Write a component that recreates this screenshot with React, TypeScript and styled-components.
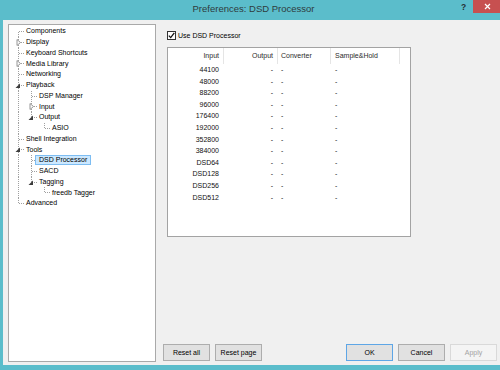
import React from 'react'
import styled, { createGlobalStyle } from 'styled-components'

const TEAL = '#5bbdcb'
const FACE = '#f0f0f0'
const FONT = `'Liberation Sans', Arial, sans-serif`
const ROW_H = 10.75

const GlobalStyle = createGlobalStyle`
  html, body {
    margin: 0;
    padding: 0;
    background: ${TEAL};
  }
  body {
    font-family: ${FONT};
    color: #000;
  }
`

const Window = styled.div`
  width: 500px;
  height: 370px;
  background: ${TEAL};
  display: flex;
  flex-direction: column;
  overflow: hidden;
`

const TitleBar = styled.div`
  height: 20px;
  flex-shrink: 0;
  display: grid;
  grid-template-columns: 1fr auto 1fr;
  align-items: start;
`

const Title = styled.div`
  grid-column: 2;
  padding: 3px 0 0 7px;
  font-size: 9.5px;
  line-height: 12px;
  color: #2f3b3d;
`

const Controls = styled.div`
  grid-column: 3;
  justify-self: end;
  display: flex;
  align-items: flex-start;
`

const HelpGlyph = styled.span`
  width: 10px;
  padding-top: 3px;
  margin-right: 2px;
  font-size: 8.5px;
  font-weight: bold;
  line-height: 9px;
  color: #253033;
`

const CloseButton = styled.div`
  width: 27px;
  height: 13px;
  background: #c75050;
  display: flex;
  align-items: center;
  justify-content: center;
  padding-left: 2px;
  box-sizing: border-box;
`

const Client = styled.div`
  flex: 1;
  margin: 0 0 5px 3px;
  padding: 4px 0 3px 5px;
  background: ${FACE};
  display: flex;
  gap: 7px;
  min-height: 0;
`

const Tree = styled.div`
  width: 148px;
  box-sizing: border-box;
  border: 1px solid #a9a9a9;
  background: #fff;
  padding: 1px 0 0 2px;
`

const TreeRow = styled.div`
  display: flex;
  align-items: center;
  height: ${ROW_H}px;
  white-space: nowrap;
`

const GuideSvg = styled.svg`
  width: 13px;
  height: ${ROW_H}px;
  flex-shrink: 0;
  display: block;
`

const TreeLabel = styled.span<{ $selected?: boolean }>`
  font-size: 7px;
  line-height: 8px;
  padding: 0 3px;
  margin-left: -2px;
  border: 1px solid ${({ $selected }) => ($selected ? '#7dbdf2' : 'transparent')};
  background: ${({ $selected }) => ($selected ? '#cce8ff' : 'transparent')};
`

const Side = styled.div`
  flex: 1;
  display: flex;
  flex-direction: column;
  padding-right: 3px;
`

const Page = styled.div`
  flex: 1;
  padding: 6px 0 0 4px;
`

const CheckRow = styled.label`
  display: flex;
  align-items: center;
  gap: 2px;
  height: 11px;
  font-size: 7px;
`

const CheckBox = styled.span`
  width: 9px;
  height: 9px;
  box-sizing: border-box;
  border: 1px solid #333;
  background: #fff;
  display: flex;
  align-items: center;
  justify-content: center;
`

const ListView = styled.div`
  margin-top: 6px;
  width: 244px;
  height: 190px;
  box-sizing: border-box;
  border: 1px solid #a3a3a3;
  background: #fff;
`

const ListRow = styled.div<{ $header?: boolean }>`
  display: grid;
  grid-template-columns: 56px 54px 53px 69px;
  height: ${({ $header }) => ($header ? '16px' : '11.6px')};
  line-height: ${({ $header }) => ($header ? '16px' : '11.6px')};
  font-size: 7px;
  color: ${({ $header }) => ($header ? '#2b2b2b' : '#111')};
`

const Cell = styled.div<{ $header?: boolean; $align: 'left' | 'right'; $pad: number }>`
  box-sizing: border-box;
  border-right: 1px solid ${({ $header }) => ($header ? '#e5e5e5' : 'transparent')};
  text-align: ${({ $align }) => $align};
  padding-left: ${({ $align, $pad }) => ($align === 'left' ? $pad : 0)}px;
  padding-right: ${({ $align, $pad }) => ($align === 'right' ? $pad : 0)}px;
  white-space: nowrap;
  overflow: hidden;
`

const ButtonRow = styled.div`
  display: flex;
  gap: 5px;
  margin-bottom: 1px;
`

const Spacer = styled.div`
  flex: 1;
`

const Button = styled.button<{ $variant?: 'default' | 'disabled' }>`
  width: 47px;
  height: 17px;
  padding: 0;
  margin: 0;
  font-family: ${FONT};
  font-size: 7px;
  color: ${({ $variant }) => ($variant === 'disabled' ? '#a3a3a3' : '#000')};
  background: ${({ $variant }) => ($variant === 'disabled' ? '#f4f4f4' : '#e1e1e1')};
  border: 1px solid
    ${({ $variant }) =>
      $variant === 'default' ? '#5ea6e6' : $variant === 'disabled' ? '#d9d9d9' : '#adadad'};
`

type TreeNode = {
  label: string
  state?: 'open' | 'closed'
  selected?: boolean
  kids?: TreeNode[]
}

const tree: TreeNode[] = [
  { label: 'Components' },
  { label: 'Display', state: 'closed' },
  { label: 'Keyboard Shortcuts' },
  { label: 'Media Library', state: 'closed' },
  { label: 'Networking' },
  {
    label: 'Playback',
    state: 'open',
    kids: [
      { label: 'DSP Manager' },
      { label: 'Input', state: 'closed' },
      { label: 'Output', state: 'open', kids: [{ label: 'ASIO' }] },
    ],
  },
  { label: 'Shell Integration' },
  {
    label: 'Tools',
    state: 'open',
    kids: [
      { label: 'DSD Processor', selected: true },
      { label: 'SACD' },
      { label: 'Tagging', state: 'open', kids: [{ label: 'freedb Tagger' }] },
    ],
  },
  { label: 'Advanced' },
]

type FlatRow = {
  node: TreeNode
  guides: boolean[]
  first: boolean
  last: boolean
}

const flatten = (nodes: TreeNode[], depth = 0, guides: boolean[] = []): FlatRow[] =>
  nodes.flatMap((node, i) => {
    const last = i === nodes.length - 1
    const row = { node, guides, first: depth === 0 && i === 0, last }
    const kids =
      node.state === 'open' && node.kids ? flatten(node.kids, depth + 1, [...guides, !last]) : []
    return [row, ...kids]
  })

const MID = 5.5

const Dots = (props: React.SVGProps<SVGLineElement>) => (
  <line stroke="#a0a0a0" strokeWidth="1" strokeDasharray="1 1" shapeRendering="crispEdges" {...props} />
)

const Guide = ({ through }: { through: boolean }) => (
  <GuideSvg viewBox={`0 0 13 ${ROW_H}`}>{through && <Dots x1="7.5" y1="0" x2="7.5" y2={ROW_H} />}</GuideSvg>
)

const Branch = ({ first, last, state }: { first: boolean; last: boolean; state?: 'open' | 'closed' }) => (
  <GuideSvg viewBox={`0 0 13 ${ROW_H}`}>
    <Dots x1="7.5" y1={first ? MID : 0} x2="7.5" y2={last ? MID : ROW_H} />
    <Dots x1="8" y1={MID} x2="13" y2={MID} />
    {state === 'closed' && (
      <polygon points="6,2.5 6,8.5 9.5,5.5" fill="#fff" stroke="#8a8a8a" strokeWidth="0.9" />
    )}
    {state === 'open' && <polygon points="4.5,8 9,8 9,3.5" fill="#3c3c3c" />}
  </GuideSvg>
)

const rates = [
  '44100',
  '48000',
  '88200',
  '96000',
  '176400',
  '192000',
  '352800',
  '384000',
  'DSD64',
  'DSD128',
  'DSD256',
  'DSD512',
]

const App = () => (
  <>
    <GlobalStyle />
    <Window>
      <TitleBar>
        <Title>Preferences: DSD Processor</Title>
        <Controls>
          <HelpGlyph>?</HelpGlyph>
          <CloseButton>
            <svg width="7" height="7" viewBox="0 0 7 7">
              <path d="M1 1 L6 6 M6 1 L1 6" stroke="#fff" strokeWidth="1.2" />
            </svg>
          </CloseButton>
        </Controls>
      </TitleBar>

      <Client>
        <Tree>
          {flatten(tree).map(({ node, guides, first, last }) => (
            <TreeRow key={node.label}>
              {guides.map((g, i) => (
                <Guide key={i} through={g} />
              ))}
              <Branch first={first} last={last} state={node.state} />
              <TreeLabel $selected={node.selected}>{node.label}</TreeLabel>
            </TreeRow>
          ))}
        </Tree>

        <Side>
          <Page>
            <CheckRow>
              <CheckBox>
                <svg width="7" height="7" viewBox="0 0 7 7">
                  <path d="M0.8 3.6 L2.7 5.6 L6.3 0.9" fill="none" stroke="#111" strokeWidth="1.3" />
                </svg>
              </CheckBox>
              Use DSD Processor
            </CheckRow>

            <ListView>
              <ListRow $header>
                <Cell $header $align="right" $pad={4}>Input</Cell>
                <Cell $header $align="right" $pad={4}>Output</Cell>
                <Cell $header $align="left" $pad={3}>Converter</Cell>
                <Cell $header $align="left" $pad={4}>Sample&amp;Hold</Cell>
              </ListRow>
              {rates.map((r) => (
                <ListRow key={r}>
                  <Cell $align="right" $pad={4}>{r}</Cell>
                  <Cell $align="right" $pad={4}>-</Cell>
                  <Cell $align="left" $pad={3}>-</Cell>
                  <Cell $align="left" $pad={4}>-</Cell>
                </ListRow>
              ))}
            </ListView>
          </Page>

          <ButtonRow>
            <Button>Reset all</Button>
            <Button>Reset page</Button>
            <Spacer />
            <Button $variant="default">OK</Button>
            <Button>Cancel</Button>
            <Button $variant="disabled">Apply</Button>
          </ButtonRow>
        </Side>
      </Client>
    </Window>
  </>
)

export default App
